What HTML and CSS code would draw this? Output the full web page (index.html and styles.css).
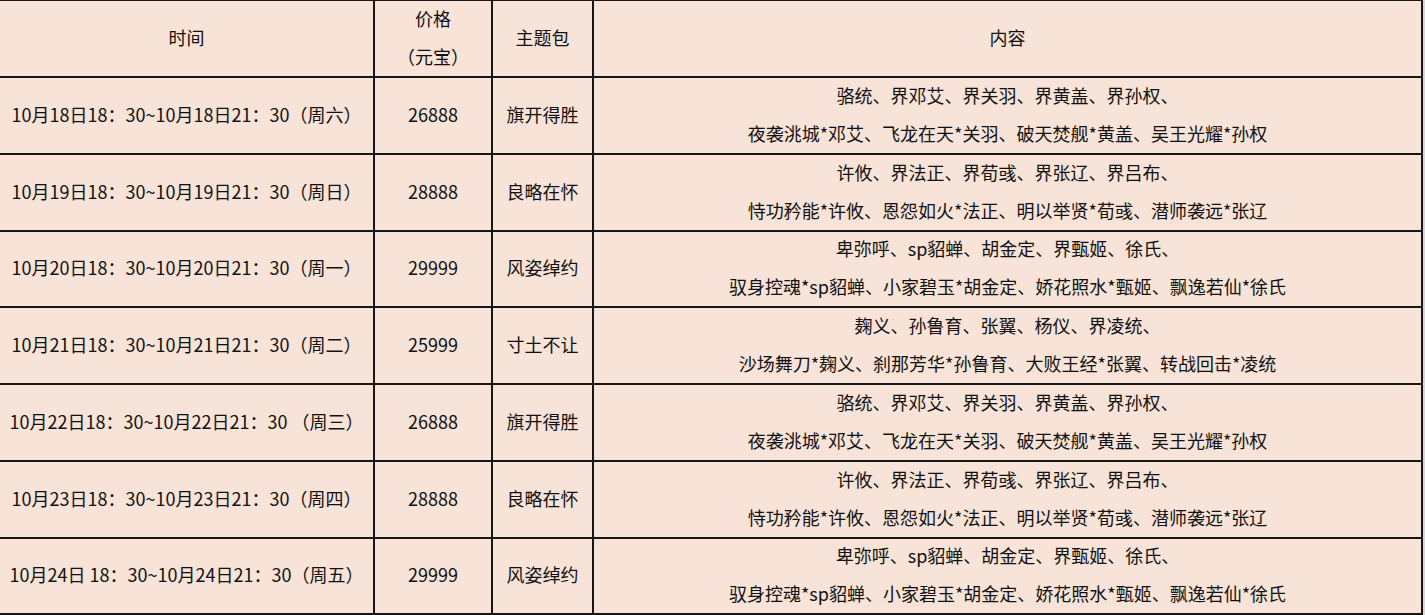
FILE: index.html
```html
<!DOCTYPE html>
<html lang="zh-CN">
<head>
<meta charset="utf-8">
<title>主题包</title>
<link rel="stylesheet" href="styles.css">
</head>
<body>
<div class="table">
  <div class="cell">时间</div>
  <div class="cell">价格<br>（元宝）</div>
  <div class="cell">主题包</div>
  <div class="cell">内容</div>

  <div class="cell">10月18日18：30~10月18日21：30（周六）</div>
  <div class="cell">26888</div>
  <div class="cell">旗开得胜</div>
  <div class="cell">骆统、界邓艾、界关羽、界黄盖、界孙权、<br>夜袭洮城*邓艾、飞龙在天*关羽、破天焚舰*黄盖、吴王光耀*孙权</div>

  <div class="cell">10月19日18：30~10月19日21：30（周日）</div>
  <div class="cell">28888</div>
  <div class="cell">良略在怀</div>
  <div class="cell">许攸、界法正、界荀彧、界张辽、界吕布、<br>恃功矜能*许攸、恩怨如火*法正、明以举贤*荀彧、潜师袭远*张辽</div>

  <div class="cell">10月20日18：30~10月20日21：30（周一）</div>
  <div class="cell">29999</div>
  <div class="cell">风姿绰约</div>
  <div class="cell">卑弥呼、sp貂蝉、胡金定、界甄姬、徐氏、<br>驭身控魂*sp貂蝉、小家碧玉*胡金定、娇花照水*甄姬、飘逸若仙*徐氏</div>

  <div class="cell">10月21日18：30~10月21日21：30（周二）</div>
  <div class="cell">25999</div>
  <div class="cell">寸土不让</div>
  <div class="cell">麹义、孙鲁育、张翼、杨仪、界凌统、<br>沙场舞刀*麹义、刹那芳华*孙鲁育、大败王经*张翼、转战回击*凌统</div>

  <div class="cell">10月22日18：30~10月22日21：30 （周三）</div>
  <div class="cell">26888</div>
  <div class="cell">旗开得胜</div>
  <div class="cell">骆统、界邓艾、界关羽、界黄盖、界孙权、<br>夜袭洮城*邓艾、飞龙在天*关羽、破天焚舰*黄盖、吴王光耀*孙权</div>

  <div class="cell">10月23日18：30~10月23日21：30（周四）</div>
  <div class="cell">28888</div>
  <div class="cell">良略在怀</div>
  <div class="cell">许攸、界法正、界荀彧、界张辽、界吕布、<br>恃功矜能*许攸、恩怨如火*法正、明以举贤*荀彧、潜师袭远*张辽</div>

  <div class="cell">10月24日 18：30~10月24日21：30（周五）</div>
  <div class="cell">29999</div>
  <div class="cell">风姿绰约</div>
  <div class="cell">卑弥呼、sp貂蝉、胡金定、界甄姬、徐氏、<br>驭身控魂*sp貂蝉、小家碧玉*胡金定、娇花照水*甄姬、飘逸若仙*徐氏</div>
</div>
</body>
</html>
```

FILE: styles.css
```css
html, body {
  margin: 0;
  padding: 0;
  background: #d9d9d9;
  overflow: hidden;
}

.table {
  display: grid;
  grid-template-columns: 373px 116px 99px 827px;
  grid-template-rows: 75px 75px 75px 74px 75px 75px 75px 74px;
  gap: 2px;
  padding: 2px;
  margin: -1px 0 0 -2px;
  width: max-content;
  background: #161616;
  font-family: "Noto Sans CJK SC", "Microsoft YaHei", sans-serif;
  font-size: 18px;
  line-height: 38px;
  color: #111111;
}

.cell {
  background: #f7e3d7;
  display: flex;
  align-items: center;
  justify-content: center;
  text-align: center;
  white-space: nowrap;
  padding-bottom: 4px;
  box-sizing: border-box;
}
```
